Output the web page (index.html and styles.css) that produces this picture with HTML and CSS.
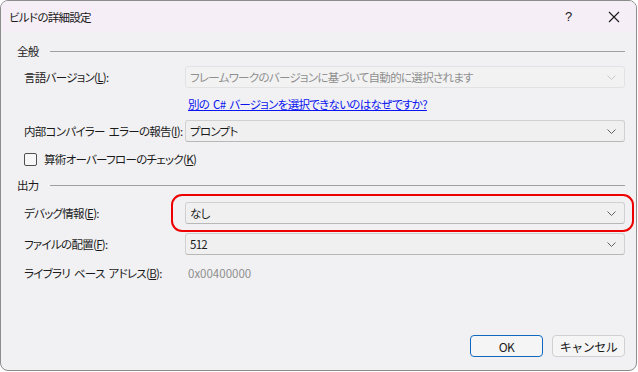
FILE: index.html
```html
<!DOCTYPE html>
<html lang="ja">
<head>
    <meta charset="UTF-8">
    <title>ビルドの詳細設定</title>
    <link rel="stylesheet" href="styles.css">
</head>
<body>
    <div class="dialog">
        <div class="title-bar">
            <span class="title">ビルドの詳細設定</span>
            <span class="title-btn help">?</span>
            <span class="title-btn close">
                <svg width="12" height="12" viewBox="0 0 12 12"><path d="M1 1L11 11M11 1L1 11" stroke="#1a1a1a" stroke-width="1.1" fill="none"/></svg>
            </span>
        </div>

        <div class="content">
            <div class="group-header"><span>全般</span><div class="rule"></div></div>

            <div class="row row-lang">
                <label class="label">言語バージョン(<u>L</u>):</label>
                <div class="combo disabled">
                    <span>フレームワークのバージョンに基づいて自動的に選択されます</span>
                    <svg class="chev" width="9" height="5" viewBox="0 0 9 5"><path d="M0.5 0.5L4.5 4.5L8.5 0.5" stroke="#c8c8c8" fill="none"/></svg>
                </div>
            </div>

            <div class="row row-link">
                <span class="label"></span>
                <a class="link" href="#">別の C# バージョンを選択できないのはなぜですか?</a>
            </div>

            <div class="row row-report">
                <label class="label">内部コンパイラー エラーの報告(<u>I</u>):</label>
                <div class="combo">
                    <span>プロンプト</span>
                    <svg class="chev" width="9" height="5" viewBox="0 0 9 5"><path d="M0.5 0.5L4.5 4.5L8.5 0.5" stroke="#606060" fill="none"/></svg>
                </div>
            </div>

            <div class="row row-check">
                <span class="checkbox"></span>
                <span class="check-label">算術オーバーフローのチェック(<u>K</u>)</span>
            </div>

            <div class="group-header out"><span>出力</span><div class="rule"></div></div>

            <div class="row row-debug">
                <label class="label">デバッグ情報(<u>E</u>):</label>
                <div class="combo">
                    <span>なし</span>
                    <svg class="chev" width="9" height="5" viewBox="0 0 9 5"><path d="M0.5 0.5L4.5 4.5L8.5 0.5" stroke="#606060" fill="none"/></svg>
                </div>
            </div>

            <div class="row row-align">
                <label class="label">ファイルの配置(<u>F</u>):</label>
                <div class="combo">
                    <span>512</span>
                    <svg class="chev" width="9" height="5" viewBox="0 0 9 5"><path d="M0.5 0.5L4.5 4.5L8.5 0.5" stroke="#606060" fill="none"/></svg>
                </div>
            </div>

            <div class="row row-base">
                <label class="label">ライブラリ ベース アドレス(<u>B</u>):</label>
                <span class="value-disabled">0x00400000</span>
            </div>

            <div class="buttons">
                <button class="btn primary">OK</button>
                <button class="btn">キャンセル</button>
            </div>
        </div>

        <div class="highlight"></div>
    </div>
</body>
</html>
```

FILE: styles.css
```css
body {
    margin: 0;
    background-color: #ffffff;
    font-family: "Noto Sans CJK JP", "Noto Sans", sans-serif;
    font-size: 11.5px;
    letter-spacing: -0.7px;
    word-spacing: 2px;
    font-feature-settings: "palt" 1;
    color: #1a1a1a;
    white-space: nowrap;
}
.dialog {
    position: relative;
    width: 635px;
    height: 369px;
    border: 1px solid #8c8c8c;
    border-radius: 8px;
    overflow: hidden;
    background-color: #f1f1f3;
    display: flex;
    flex-direction: column;
}
.title-bar {
    height: 31px;
    flex: none;
    display: flex;
    align-items: center;
    background-color: #f5eef6;
    padding-left: 8px;
}
.title {
    flex: 1;
}
.title-btn {
    width: 45px;
    display: flex;
    justify-content: center;
    align-items: center;
    font-size: 13px;
    letter-spacing: 0;
    font-family: "Liberation Sans", sans-serif;
}
.content {
    flex: 1;
    display: flex;
    flex-direction: column;
    padding: 12px 11px 13px 16px;
}
.group-header {
    height: 14px;
    display: flex;
    align-items: center;
}
.group-header span {
    width: 33px;
    line-height: 14px;
}
.group-header .rule {
    flex: 1;
    border-top: 1px solid #a0a0a0;
}
.group-header.out {
    margin-top: 8px;
}
.row {
    display: flex;
    align-items: center;
    height: 22px;
    padding-left: 7px;
}
.label {
    width: 161px;
    flex: none;
}
.combo {
    flex: 1;
    height: 20px;
    display: flex;
    align-items: center;
    justify-content: space-between;
    padding: 0 8px 0 4px;
    background-color: #f0f0f0;
    border: 1px solid #d0d0d0;
    border-bottom-color: #b8b8b8;
    border-radius: 3px;
}
.combo.disabled {
    color: #8f8f8f;
    border-color: #e2e2e4;
    background-color: #f2f2f3;
}
.row-lang { margin-top: 8px; }
.row-link { margin-top: 6px; height: 20px; }
.row-report { margin-top: 6px; }
.row-check { margin-top: 6px; }
.row-debug { margin-top: 10px; }
.row-align { margin-top: 9px; }
.row-base { margin-top: 7px; }
.link {
    color: #0a14f0;
    text-decoration: underline;
    padding-left: 3px;
}
.checkbox {
    width: 11px;
    height: 11px;
    border: 1px solid #505050;
    border-radius: 2px;
    background-color: #f7f7f7;
    margin-right: 7px;
}
.value-disabled {
    color: #8f8f8f;
    padding-left: 3px;
    letter-spacing: 0;
}
.buttons {
    margin-top: auto;
    display: flex;
    justify-content: flex-end;
    gap: 9px;
}
.btn {
    width: 73px;
    height: 22px;
    padding: 0;
    font-family: inherit;
    font-size: 12px;
    letter-spacing: -0.5px;
    color: #1a1a1a;
    background-color: #f5f5f5;
    border: 1px solid #d0d0d0;
    border-radius: 4px;
}
.btn.primary {
    border-color: #1068c0;
}
.highlight {
    position: absolute;
    left: 170px;
    top: 193px;
    width: 459px;
    height: 34px;
    border: 2px solid #ee0000;
    border-radius: 11px;
}
```
